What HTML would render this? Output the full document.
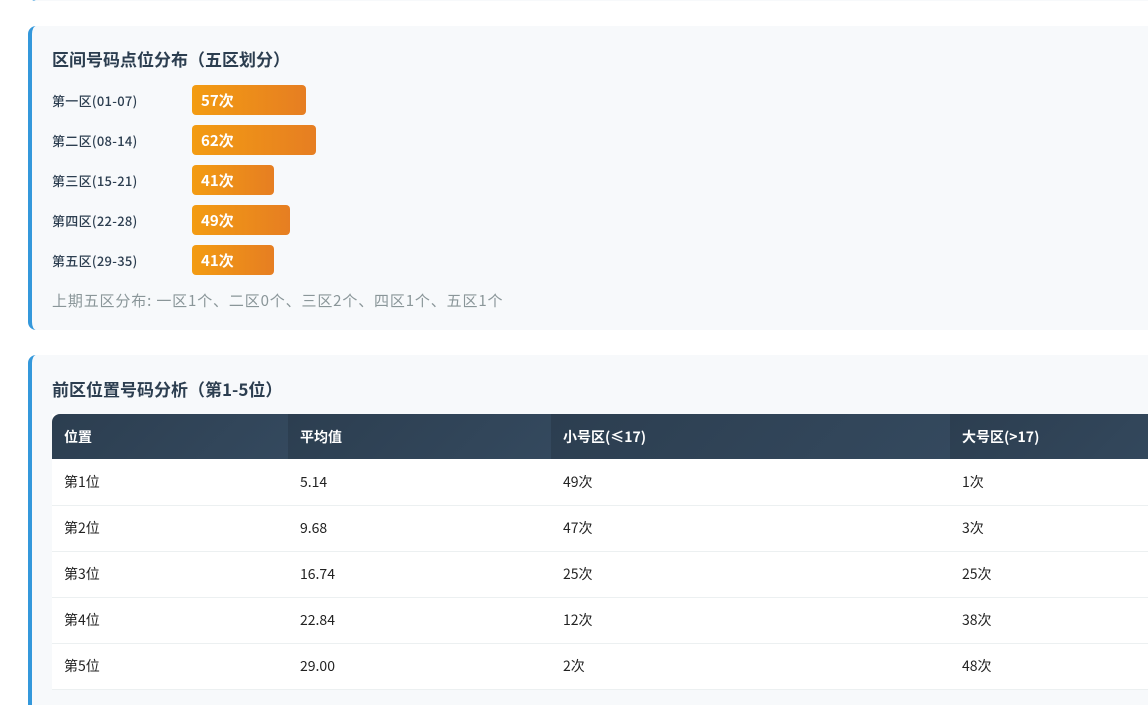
<!DOCTYPE html>
<html><head><meta charset="utf-8"><style>
*{margin:0;padding:0;box-sizing:border-box}
html,body{width:1148px;height:705px;overflow:hidden}
body{background:#fff;font-family:"Noto Sans CJK SC","Liberation Sans",sans-serif;position:relative}
.card{position:absolute;left:28px;width:1140px;background:#f7f9fb;border-left:4px solid #3498db;border-radius:8px 0 0 8px}
h3{position:absolute;left:20px;font-size:17px;font-weight:bold;color:#2c3e50;line-height:24px}
.lbl{position:absolute;left:20px;font-size:13px;letter-spacing:0.3px;color:#2c3e50;font-weight:500;line-height:16px}
.bar{position:absolute;left:160px;height:30px;border-radius:4px;background:linear-gradient(90deg,#f39c12,#e67e22);color:#fff;font-weight:bold;font-size:15px;display:flex;align-items:center;padding-left:9px}
table{position:absolute;left:20px;top:59px;width:1130px;border-collapse:collapse;background:#fff;font-size:14px;color:#222}
th{background:linear-gradient(135deg,#2c3e50,#34495e);color:#fff;text-align:left;height:45px;padding:0 0 0 12px;font-size:14px;line-height:20px}
td{height:46px;padding:0 0 0 12px;border-bottom:1px solid #ecf0f1;line-height:20px}
</style></head><body>
<div class="card" style="top:-20px;height:21px"></div>
<div class="card" style="top:26px;height:304px">
<h3 style="top:21px">区间号码点位分布（五区划分）</h3>
<div class="lbl" style="top:67px">第一区(01-07)</div><div class="bar" style="top:59px;width:114px">57次</div>
<div class="lbl" style="top:107px">第二区(08-14)</div><div class="bar" style="top:99px;width:124px">62次</div>
<div class="lbl" style="top:147px">第三区(15-21)</div><div class="bar" style="top:139px;width:82px">41次</div>
<div class="lbl" style="top:187px">第四区(22-28)</div><div class="bar" style="top:179px;width:98px">49次</div>
<div class="lbl" style="top:227px">第五区(29-35)</div><div class="bar" style="top:219px;width:82px">41次</div>
<div style="position:absolute;left:20px;top:265px;font-size:15px;letter-spacing:0.85px;line-height:20px;color:#8a9699">上期五区分布: 一区1个、二区0个、三区2个、四区1个、五区1个</div>
</div>
<div class="card" style="top:355px;height:380px">
<h3 style="top:22px">前区位置号码分析（第1-5位）</h3>
<table>
<tr><th style="width:236px;border-top-left-radius:8px">位置</th><th style="width:263px">平均值</th><th style="width:399px">小号区(≤17)</th><th>大号区(&gt;17)</th></tr>
<tr><td>第1位</td><td>5.14</td><td>49次</td><td>1次</td></tr>
<tr><td>第2位</td><td>9.68</td><td>47次</td><td>3次</td></tr>
<tr><td>第3位</td><td>16.74</td><td>25次</td><td>25次</td></tr>
<tr><td>第4位</td><td>22.84</td><td>12次</td><td>38次</td></tr>
<tr><td>第5位</td><td>29.00</td><td>2次</td><td>48次</td></tr>
</table>
</div>
</body></html>
